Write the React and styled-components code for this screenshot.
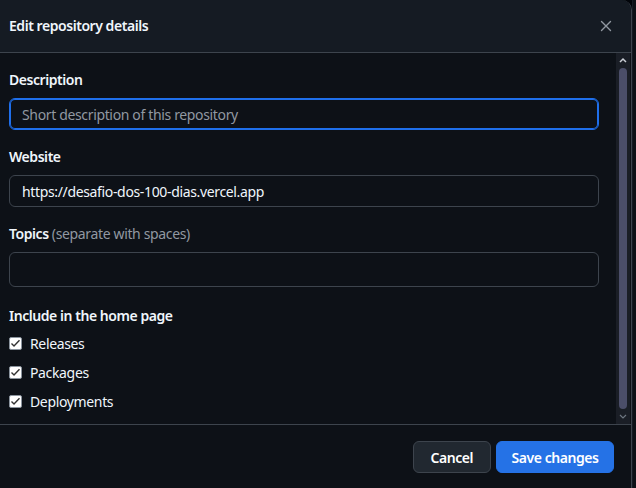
import styled, { createGlobalStyle } from "styled-components";

const Global = createGlobalStyle`
  html, body {
    margin: 0;
    padding: 0;
    background: #010409;
    height: 100%;
  }
  #root {
    height: 100%;
  }
  * {
    box-sizing: border-box;
  }
`;

const Screen = styled.div`
  display: flex;
  height: 488px;
  width: 636px;
  overflow: hidden;
  font-family: "Noto Sans", "Liberation Sans", sans-serif;
  color: #f0f6fc;
`;

const Dialog = styled.div`
  width: 632px;
  height: 488px;
  display: flex;
  flex-direction: column;
  background: #0d1117;
  border-right: 1px solid #3d444d;
  border-top-right-radius: 10px;
  overflow: hidden;
`;

const PageEdge = styled.div`
  flex: 1;
  background: #0d1117;
  border-left: 1px solid #151b23;
`;

const Header = styled.div`
  height: 53px;
  flex-shrink: 0;
  display: flex;
  align-items: center;
  justify-content: space-between;
  padding: 0 17px 1px 9px;
  background: #151b23;
  border-bottom: 1px solid #3d444d;
`;

const Title = styled.h1`
  margin: 0;
  font-size: 14px;
  font-weight: 600;
  letter-spacing: -0.45px;
`;

const CloseButton = styled.button`
  background: none;
  border: 0;
  padding: 0;
  display: flex;
  color: #9198a1;
`;

const Body = styled.div`
  flex: 1;
  display: flex;
  min-height: 0;
`;

const Content = styled.div`
  flex: 1;
  padding: 17px 17px 0 9px;
`;

const Group = styled.div`
  margin-bottom: 17px;
`;

const Label = styled.label`
  display: block;
  font-size: 14px;
  font-weight: 600;
  line-height: 20px;
  padding-top: ${(p) => p.$top || 0}px;
  margin-bottom: ${(p) => p.$gap || 8}px;
  letter-spacing: -0.45px;
`;

const Hint = styled.span`
  font-weight: 400;
  color: #9198a1;
  letter-spacing: -0.35px;
`;

const Input = styled.input`
  display: block;
  width: 100%;
  height: ${(p) => p.$h || 32}px;
  padding: 0 12px;
  font-family: inherit;
  font-size: 14px;
  color: #f0f6fc;
  background: #0d1117;
  border: 1px solid ${(p) => (p.$focus ? "#1f6feb" : "#3d444d")};
  box-shadow: ${(p) => (p.$focus ? "inset 0 0 0 1px #1f6feb" : "none")};
  border-radius: 6px;
  outline: none;
  letter-spacing: -0.35px;
  &::placeholder {
    color: #9198a1;
  }
`;

const CheckList = styled.div`
  display: flex;
  flex-direction: column;
  gap: 9px;
`;

const CheckRow = styled.div`
  display: flex;
  align-items: center;
  gap: 8px;
  height: 20px;
  font-size: 14px;
  letter-spacing: -0.35px;
`;

const Box = styled.span`
  width: 13px;
  height: 13px;
  background: #fff;
  border: 1px solid #8b949e;
  border-radius: 2px;
  display: flex;
  align-items: center;
  justify-content: center;
`;

const Scrollbar = styled.div`
  width: 14px;
  margin-right: 1px;
  display: flex;
  flex-direction: column;
  align-items: center;
  background: #1a1e26;
`;

const Arrow = styled.div`
  height: 14px;
  display: flex;
  align-items: center;
  justify-content: center;
  color: #c9cdd4;
`;

const Thumb = styled.div`
  flex: 1;
  width: 8px;
  margin: 1px 0;
  border-radius: 4px;
  background: #4b4e69;
`;

const Footer = styled.div`
  height: 64px;
  flex-shrink: 0;
  display: flex;
  justify-content: flex-end;
  align-items: flex-start;
  gap: 5px;
  padding: 16px 17px 0 0;
  border-top: 1px solid #3d444d;
`;

const Button = styled.button`
  height: 32px;
  padding: 0 ${(p) => (p.$primary ? 14.5 : 17)}px;
  font-family: inherit;
  font-size: 14px;
  font-weight: 600;
  letter-spacing: -0.45px;
  color: #fff;
  border-radius: 6px;
  border: 1px solid ${(p) => (p.$primary ? "#2572e6" : "#3d444d")};
  background: ${(p) => (p.$primary ? "#2572e6" : "#212830")};
`;

function Check({ label }) {
  return (
    <CheckRow>
      <Box>
        <svg width="11" height="11" viewBox="0 0 11 11">
          <path d="M1.5 5.5 L4 8 L9.5 2.2" fill="none" stroke="#333" strokeWidth="1.4" />
        </svg>
      </Box>
      {label}
    </CheckRow>
  );
}

export default function App() {
  return (
    <>
      <Global />
      <Screen>
        <Dialog>
          <Header>
            <Title>Edit repository details</Title>
            <CloseButton aria-label="Close">
              <svg width="16" height="16" viewBox="0 0 16 16">
                <path d="M3.5 3.5 L12.5 12.5 M12.5 3.5 L3.5 12.5" stroke="currentColor" strokeWidth="1.4" strokeLinecap="round" />
              </svg>
            </CloseButton>
          </Header>
          <Body>
            <Content>
              <Group>
                <Label>Description</Label>
                <Input $focus placeholder="Short description of this repository" />
              </Group>
              <Group>
                <Label>Website</Label>
                <Input defaultValue="https://desafio-dos-100-dias.vercel.app" />
              </Group>
              <Group>
                <Label>
                  Topics <Hint>(separate with spaces)</Hint>
                </Label>
                <Input $h={35} />
              </Group>
              <Label $top={2} $gap={7}>Include in the home page</Label>
              <CheckList>
                <Check label="Releases" />
                <Check label="Packages" />
                <Check label="Deployments" />
              </CheckList>
            </Content>
            <Scrollbar>
              <Arrow>
                <svg width="8" height="6" viewBox="0 0 8 6">
                  <path d="M1 5 L4 2 L7 5" fill="none" stroke="currentColor" strokeWidth="1.5" />
                </svg>
              </Arrow>
              <Thumb />
              <Arrow>
                <svg width="8" height="6" viewBox="0 0 8 6">
                  <path d="M1 1 L4 4 L7 1" fill="none" stroke="#6e7681" strokeWidth="1.2" />
                </svg>
              </Arrow>
            </Scrollbar>
          </Body>
          <Footer>
            <Button>Cancel</Button>
            <Button $primary>Save changes</Button>
          </Footer>
        </Dialog>
        <PageEdge />
      </Screen>
    </>
  );
}
